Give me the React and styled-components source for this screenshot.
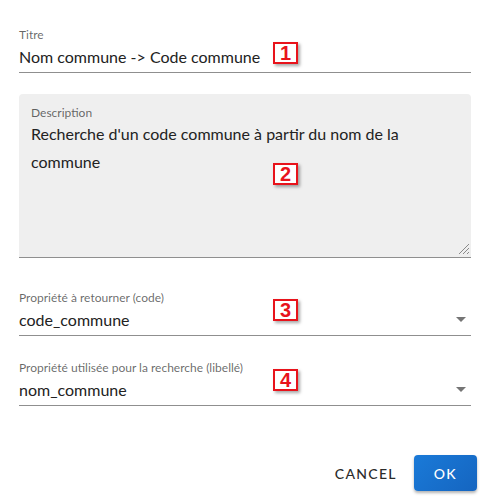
import React from 'react';
import styled, { createGlobalStyle } from 'styled-components';

const GlobalStyle = createGlobalStyle`
	body {
		margin: 0;
		background: #ffffff;
		font-family: 'Lato', 'Open Sans', sans-serif;
		color: #222;
	}
`;

const Dialog = styled.div`
	width: 493px;
	height: 496px;
	box-sizing: border-box;
	padding: 28px 22px 0 19px;
	display: flex;
	flex-direction: column;
`;

const Field = styled.div`
	position: relative;
	margin-top: ${(p) => p.top || 0}px;
	padding-bottom: 3px;
	border-bottom: 1px solid #8f8f8f;
`;

const Label = styled.div`
	font-size: 12px;
	line-height: 14px;
	color: rgba(0, 0, 0, 0.6);
`;

const Value = styled.div`
	margin-top: 3px;
	font-size: 16px;
	line-height: 24px;
	color: #222;
`;

const TextArea = styled.div`
	position: relative;
	margin-top: 21px;
	height: 151px;
	padding: 12px 12px 0;
	background: #efefef;
	border-radius: 4px 4px 0 0;
	border-bottom: 1px solid #8f8f8f;
`;

const AreaText = styled.div`
	font-size: 16px;
	line-height: 28px;
	color: #222;
	padding-right: 40px;
`;

const Grip = styled.svg`
	position: absolute;
	right: 1px;
	bottom: 2px;
`;

const Arrow = styled.div`
	position: absolute;
	right: 5px;
	bottom: 13px;
	width: 0;
	height: 0;
	border-left: 5px solid transparent;
	border-right: 5px solid transparent;
	border-top: 5px solid #757575;
`;

const Badge = styled.div`
	position: absolute;
	left: 254px;
	top: ${(p) => p.top}px;
	width: 21px;
	height: 18px;
	border: 2px solid #e8131b;
	background: #fff;
	color: #e8131b;
	font-family: 'Liberation Sans', Arial, sans-serif;
	font-weight: bold;
	font-size: 20px;
	line-height: 18px;
	text-align: center;
	box-shadow: 2px 2px 3px rgba(0, 0, 0, 0.35);
`;

const Actions = styled.div`
	margin-top: 49px;
	margin-right: -6px;
	display: flex;
	justify-content: flex-end;
	align-items: center;
`;

const Button = styled.button`
	font-family: 'Lato', 'Open Sans', sans-serif;
	font-size: 14px;
	font-weight: 500;
	letter-spacing: 1.3px;
	border: none;
	border-radius: 4px;
	cursor: pointer;
	height: 36px;
	padding: 0 ${(p) => (p.primary ? 20 : 8)}px;
	min-width: ${(p) => (p.primary ? 62 : 0)}px;
	margin-left: ${(p) => (p.primary ? 9 : 0)}px;
	color: ${(p) => (p.primary ? '#ffffff' : '#2b2b2b')};
	background: ${(p) => (p.primary ? 'linear-gradient(135deg, #1a7ad8, #1565c0)' : 'transparent')};
	box-shadow: ${(p) => (p.primary ? '0 2px 3px rgba(0,0,0,0.3)' : 'none')};
`;

const App = () => {
	return (
		<>
			<GlobalStyle />
			<Dialog>
				<Field>
					<Label>Titre</Label>
					<Value>Nom commune -&gt; Code commune</Value>
					<Badge top={14}>1</Badge>
				</Field>
				<TextArea>
					<Label>Description</Label>
					<AreaText>Recherche d'un code commune à partir du nom de la commune</AreaText>
					<Badge top={69}>2</Badge>
					<Grip width="14" height="14" viewBox="0 0 14 14">
						<path d="M13 3 L3 13 M13 7 L7 13 M13 11 L11 13" stroke="#8a8a8a" strokeWidth="1" />
					</Grip>
				</TextArea>
				<Field top={33}>
					<Label>Propriété à retourner (code)</Label>
					<Value>code_commune</Value>
					<Arrow />
					<Badge top={8}>3</Badge>
				</Field>
				<Field top={25}>
					<Label>Propriété utilisée pour la recherche (libellé)</Label>
					<Value>nom_commune</Value>
					<Arrow />
					<Badge top={8}>4</Badge>
				</Field>
				<Actions>
					<Button>CANCEL</Button>
					<Button primary>OK</Button>
				</Actions>
			</Dialog>
		</>
	);
};

export default App;
